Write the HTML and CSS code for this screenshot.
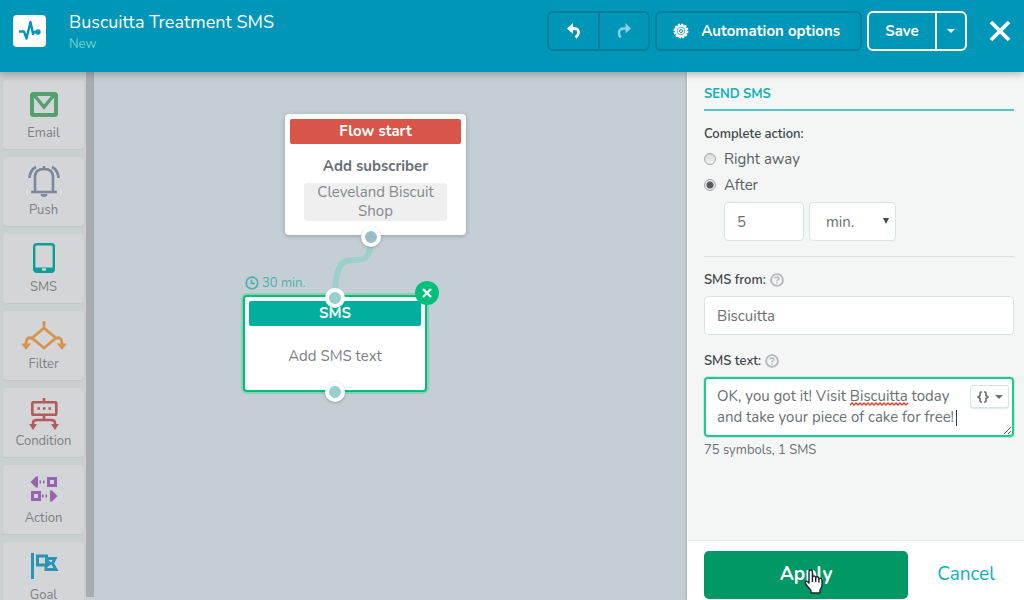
FILE: index.html
```html
<!DOCTYPE html>
<html lang="en">
<head>
<meta charset="utf-8">
<meta name="viewport" content="width=device-width, initial-scale=1">
<title>Buscuitta Treatment SMS</title>
<link rel="stylesheet" href="styles.css">
</head>
<body>
<header class="topbar">
  <div class="logo">
    <svg width="22" height="22" viewBox="0 0 22 22" fill="none" stroke="#0096b7" stroke-width="2.400" stroke-linejoin="round"><path d="M0 11.500H5L7.500 18.500L11.500 2L14 14L15 12H18"/><circle cx="19" cy="12" r="2.700" fill="#0096b7" stroke="none"/></svg>
  </div>
  <div class="heading">
    <h1>Buscuitta Treatment SMS</h1>
    <span class="status">New</span>
  </div>
  <div class="actions">
    <div class="group">
      <button class="tool" aria-label="Undo"><svg width="14" height="16" viewBox="0 0 14 16" fill="none" stroke="#fff" stroke-width="2.800"><path d="M3 5.500H7Q12 5.500 11.500 10Q11.300 12.500 8.500 14.500"/><path d="M6 0L0 5.500L6 11Z" fill="#fff" stroke="none"/></svg></button>
      <button class="tool faded" aria-label="Redo" disabled><svg width="14" height="16" viewBox="0 0 14 16" fill="none" stroke="#8dd1e1" stroke-width="2.400"><path d="M10 5.500H7Q2 5.500 2 10Q2 12.500 3.500 14.500"/><path d="M8.500 0L14 5.500L8.500 10.500Z" fill="#8dd1e1" stroke="none"/></svg></button>
    </div>
    <button class="options"><svg width="16" height="16" viewBox="0 0 16 16" fill="none"><circle cx="8" cy="8" r="6.300" fill="#fff"/><circle cx="8" cy="8" r="6.600" stroke="#fff" stroke-width="1.800" stroke-dasharray="2.200 1.250"/><circle cx="8" cy="8" r="3.800" stroke="#4db5cc"/><circle cx="8" cy="8" r="1.500" stroke="#0096b7"/></svg>Automation options</button>
    <div class="group save">
      <button class="save-main">Save</button>
      <button class="save-more" aria-label="More save options"><span class="caret"></span></button>
    </div>
    <button class="close" aria-label="Close"><svg width="22" height="22" viewBox="0 0 22 22" stroke="#fff" stroke-width="3.800"><path d="M2 2L20 20M20 2L2 20"/></svg></button>
  </div>
</header>
<div class="workspace">
  <nav class="palette" aria-label="Elements">
    <div class="tiles">
      <button class="tile"><svg width="28" height="32" viewBox="0 0 28 32" fill="none" stroke="#55a06c" stroke-width="4"><rect x="2" y="6" width="24" height="21" rx="1.500"/><path d="M4 7L14 19L24 7" stroke-width="3.400"/></svg>Email</button>
      <button class="tile"><svg width="32" height="32" viewBox="0 0 32 32" fill="none" stroke="#7b879c" stroke-width="2.600"><path d="M3 27H29M7 27V12Q7 4 16 4Q25 4 25 12V27M16 1V4"/><path d="M1.500 13Q2 5 8 2M30.500 13Q30 5 24 2"/><path d="M12.500 29H19.500Q19 32 16 32Q13 32 12.500 29Z" fill="#7b879c" stroke="none"/></svg>Push</button>
      <button class="tile"><svg width="24" height="32" viewBox="0 0 24 32" fill="none" stroke="#0a9f95" stroke-width="2.400"><rect x="2.200" y="2.200" width="19.600" height="27.600" rx="2.500"/><path d="M2 27.500H22" stroke-width="4"/><path d="M10 27.500H14" stroke="#d3d5d9"/></svg>SMS</button>
      <button class="tile"><svg width="46" height="32" viewBox="0 0 46 32" fill="none" stroke="#d8934a" stroke-width="2.800"><path d="M23 2V9L35 19L23 29L11 19L23 9M12 19H8Q5 19 5 26M34 19H38Q41 19 41 26"/><path d="M0 24.500H10L5 31ZM36 24.500H46L41 31Z" fill="#d8934a" stroke="none"/></svg>Filter</button>
      <button class="tile"><svg width="30" height="34" viewBox="0 0 30 34" fill="none" stroke="#b15b5b" stroke-width="2.600"><rect x="3.300" y="6.300" width="24" height="12.500" rx="1"/><path d="M15 2V6M15 19V24M4 30V27Q4 24 8 24H22Q26 24 26 27V30"/><path d="M8.500 12.500H11M14 12.500H16.500M19.500 12.500H22"/><path d="M0 28H8L4 34ZM22 28H30L26 34Z" fill="#b15b5b" stroke="none"/></svg>Condition</button>
      <button class="tile"><svg width="28" height="32" viewBox="0 -2 28 32" fill="none" stroke="#9465ac" stroke-width="3"><rect x="18.500" y="3.500" width="7" height="7"/><rect x="2.500" y="17.500" width="7" height="7"/><path d="M9.500 7H16M12 21H18.500" stroke-dasharray="1.500 2"/><path d="M0.500 7L6 1.500H8V12.500H6ZM27.500 21L22 15.500H20V26.500H22Z" fill="#9465ac" stroke="none"/></svg>Action</button>
      <button class="tile"><svg width="28" height="30" viewBox="0 0 28 30" fill="none" stroke="#2795b3" stroke-width="3"><path d="M2.500 3V29"/><rect x="7.500" y="6" width="9" height="9"/><path d="M16 8.500H25L22.500 13.500L26 19.500H16V16L20 13.500L17 11"/></svg>Goal</button>
    </div>
  </nav>
  <main class="canvas">
    <svg class="link" width="50" height="56" viewBox="0 0 50 56" fill="none" stroke="#9fcfcc" stroke-width="6"><path d="M43 0C43 18 36 20 28 20H24C12 20 7 30 7 56"/></svg>
    <section class="node start">
      <h2 class="node-title">Flow start</h2>
      <p class="node-lead">Add subscriber</p>
      <p class="node-tag">Cleveland Biscuit Shop</p>
      <span class="port port-start"></span>
    </section>
    <div class="delay"><svg width="14" height="14" viewBox="0 0 14 14" fill="none" stroke="#4fafac" stroke-width="1.700"><circle cx="7" cy="7" r="5.800"/><path d="M6.500 3.500V7.500H10"/></svg>30 min.</div>
    <section class="node sms">
      <h2 class="node-title">SMS</h2>
      <p class="node-text">Add SMS text</p>
      <span class="port port-in"></span>
      <span class="port port-out"></span>
      <button class="remove" aria-label="Remove"><svg width="10" height="10" viewBox="0 0 10 10" stroke="#fff" stroke-width="2.300"><path d="M1 1L9 9M9 1L1 9"/></svg></button>
    </section>
  </main>
  <aside class="panel">
    <form class="fields">
      <h2 class="panel-title">SEND SMS</h2>
      <fieldset>
        <legend>Complete action:</legend>
        <label class="choice"><input type="radio" name="when">Right away</label>
        <label class="choice"><input type="radio" name="when" checked>After</label>
        <div class="period">
          <input class="box amount" type="text" value="5" aria-label="Delay">
          <div class="unit"><select class="box" aria-label="Delay unit"><option>min.</option></select><span class="arrow"></span></div>
        </div>
      </fieldset>
      <div class="label-row"><label for="from">SMS from:</label><svg width="14" height="14" viewBox="0 0 14 14" fill="none" stroke="#b2babd" stroke-width="1.900"><circle cx="7" cy="7" r="5.900"/><path d="M5 5.600Q5 4 7 4Q9 4 9 5.500Q9 6.500 7 7.400V8.300M7 9.300V10.800" stroke-width="1.500"/></svg></div>
      <input class="box" id="from" type="text" value="Biscuitta">
      <div class="label-row second"><label for="text">SMS text:</label><svg width="14" height="14" viewBox="0 0 14 14" fill="none" stroke="#b2babd" stroke-width="1.900"><circle cx="7" cy="7" r="5.900"/><path d="M5 5.600Q5 4 7 4Q9 4 9 5.500Q9 6.500 7 7.400V8.300M7 9.300V10.800" stroke-width="1.500"/></svg></div>
      <div class="message">
        <textarea id="text" spellcheck="false">OK, you got it! Visit Biscuitta today
and take your piece of cake for free!</textarea>
        <svg class="squiggle" width="59" height="4" viewBox="0 0 59 4" fill="none" stroke="#f0382f" stroke-width="1.300"><path d="M0 3L2 1L4 3L6 1L8 3L10 1L12 3L14 1L16 3L18 1L20 3L22 1L24 3L26 1L28 3L30 1L32 3L34 1L36 3L38 1L40 3L42 1L44 3L46 1L48 3L50 1L52 3L54 1L56 3L58 1"/></svg>
        <span class="cursor"></span>
        <button type="button" class="insert" aria-label="Insert variable"><svg width="12" height="12" viewBox="0 0 12 12" fill="none" stroke="#687173" stroke-width="1.700"><path d="M5 1H4Q3 1 3 2.500V4.500L1 6L3 7.500V9.500Q3 11 4 11H5M7 1H8Q9 1 9 2.500V4.500L11 6L9 7.500V9.500Q9 11 8 11H7"/></svg><span class="caret"></span></button>
      </div>
      <p class="count">75 symbols, 1 SMS</p>
    </form>
    <footer class="panel-footer">
      <button class="apply">Apply</button>
      <a class="cancel" href="#">Cancel</a>
      <svg class="pointer" width="20" height="25" viewBox="0 0 20 25" fill="#fff" stroke="#20262b" stroke-width="1.400" stroke-linejoin="round"><path d="M5 14V3Q5 1 6.700 1Q8.400 1 8.400 3V9Q8.400 7 10 7Q11.600 7 11.700 9Q12 7.500 13.400 7.800Q14.800 8 14.900 10Q15.500 9 16.700 9.300Q18 9.600 18 11V16Q18 19 16 21V24H7V21.500L2 15.500Q0.500 13 2 12.300Q3.500 12 5 14Z"/><path d="M8.400 9V13M11.700 9V13M14.900 10V13.500"/></svg>
    </footer>
  </aside>
</div>
</body>
</html>
```
FILE: styles.css
```css
* { box-sizing: border-box; }
body {
  margin: 0;
  height: 100vh;
  display: flex;
  flex-direction: column;
  overflow: hidden;
  font-family: Nunito, Lato, sans-serif;
  font-size: 15px;
  color: #687073;
}
h1, h2, p { margin: 0; }
button, input, select, textarea { font: inherit; color: inherit; }
button { border: 0; padding: 0; background: none; cursor: pointer; }
svg { flex: none; }

.topbar {
  flex: none;
  display: flex;
  align-items: flex-start;
  height: 72px;
  padding: 11px 13px 0 13px;
  background: #0096b7;
  color: #fff;
  box-shadow: 0 1px 8px rgba(60, 60, 60, 0.45);
  z-index: 2;
}
.logo {
  display: flex;
  align-items: center;
  justify-content: center;
  width: 33px;
  height: 32px;
  margin: 4px 23px 0 0;
  border-radius: 4px;
  background: #fff;
}
.heading { flex: 1; }
h1 { font-size: 18px; line-height: 22px; font-weight: 400; }
.status { display: block; font-size: 13px; line-height: 22px; color: #6fd3c5; }
.actions { display: flex; align-items: center; gap: 5px; }
.group, .options {
  display: flex;
  align-items: center;
  height: 40px;
  border: 2px solid #007f9c;
  border-radius: 6px;
}
.tool { display: flex; align-items: center; justify-content: center; width: 49px; height: 36px; }
.faded { border-left: 2px solid #007f9c; width: 50px; }
.options { gap: 12px; padding: 0 20px 0 16px; font-weight: 700; }
.save { border-color: #fff; font-weight: 700; }
.save-main { width: 66px; height: 36px; }
.save-more { display: flex; align-items: center; justify-content: center; width: 30px; height: 36px; border-left: 2px solid #fff; }
.caret { border: 4px solid transparent; border-top-color: currentColor; border-bottom: 0; }
.close { display: flex; margin-left: 17px; }

.workspace { flex: 1; display: flex; min-height: 0; }
.palette {
  flex: none;
  width: 94px;
  overflow: hidden;
  background: linear-gradient(#a9acb1, #a9acb1) right top / 8px calc(100% - 3px) no-repeat, #cacfd2;
}
.tiles { display: flex; flex-direction: column; gap: 8px; width: 84px; padding: 8px 0 0 3px; }
.tile {
  flex: none;
  display: flex;
  flex-direction: column;
  align-items: center;
  justify-content: space-between;
  height: 69px;
  padding: 8px 0;
  border-radius: 4px;
  background: #d3d5d9;
  box-shadow: 0 1px 1px #c2c6ca;
  font-size: 13px;
  line-height: 16px;
  color: #7d8083;
}

.canvas { flex: 1; position: relative; overflow: hidden; background: #c3cfd4; }
.link { position: absolute; left: 234px; top: 168px; }
.node {
  position: absolute;
  padding: 5px;
  border-radius: 4px;
  background: #fff;
  text-align: center;
  box-shadow: 0 1px 4px rgba(70, 90, 100, 0.4);
}
.start { left: 191px; top: 42px; width: 181px; height: 121px; }
.node-title { border-radius: 2px; font-size: 15px; line-height: 25px; font-weight: 700; color: #fff; background: #d75649; }
.node-lead { margin-top: 12px; font-weight: 700; line-height: 20px; }
.node-tag { margin: 7px 14px 0; padding: 0 8px; border-radius: 3px; background: #efefef; line-height: 19px; color: #84898c; }
.sms {
  left: 149px;
  top: 223px;
  width: 184px;
  height: 97px;
  padding: 4px;
  border: 2px solid #00bd78;
  box-shadow: 0 0 0 2px #8fcdbb;
}
.sms .node-title { background: #00af9d; }
.node-text { margin-top: 20px; line-height: 20px; color: #7a8184; }
.port {
  position: absolute;
  width: 20px;
  height: 20px;
  border: 4px solid #fff;
  border-radius: 50%;
  background: #98cfc9;
  box-shadow: 0 1px 3px rgba(70, 90, 100, 0.4);
}
.port-start { left: 76px; bottom: -12px; background: #9abcc8; }
.port-in { left: 80px; top: -9px; box-shadow: none; }
.port-out { left: 80px; bottom: -12px; }
.remove {
  position: absolute;
  right: -14px;
  top: -16px;
  display: flex;
  align-items: center;
  justify-content: center;
  width: 24px;
  height: 24px;
  border-radius: 50%;
  background: #00bf7b;
}
.delay { position: absolute; left: 151px; top: 202px; display: flex; align-items: center; gap: 3px; font-size: 13px; line-height: 18px; color: #4fafac; }

.panel {
  flex: none;
  display: flex;
  flex-direction: column;
  width: 337px;
  border-left: 1px solid #fff;
  background: #f4f6f6;
  box-shadow: -1px 0 2px #a5afb5;
  z-index: 1;
}
.fields { flex: 1; padding: 11px 10px 0 16px; }
.panel-title { padding-bottom: 4px; border-bottom: 2px solid #4fc3c9; font-size: 13px; line-height: 22px; font-weight: 700; color: #12b0b5; }
fieldset { margin: 0; padding: 0 0 15px; border: 0; border-bottom: 1px solid #d0e4e2; }
legend { padding: 14px 0 3px; font-size: 13px; line-height: 18px; font-weight: 600; color: #3d4547; }
.choice { display: flex; align-items: center; gap: 8px; line-height: 26px; color: #565e60; }
input[type="radio"] {
  appearance: none;
  width: 12px;
  height: 12px;
  margin: 0;
  border: 1px solid #a4a9aa;
  border-radius: 50%;
  background: linear-gradient(#d7dbdb, #f0f1f1);
}
input[type="radio"]:checked { background: radial-gradient(#555b5d 0 3px, #e6e9e9 4px); }
.period { display: flex; gap: 5px; margin: 4px 0 0 20px; }
.box {
  display: block;
  width: 100%;
  height: 39px;
  padding: 0 12px;
  border: 1px solid #d4e5e4;
  border-radius: 4px;
  background: #fff;
  outline: 0;
}
.amount { width: 80px; }
.unit { position: relative; width: 87px; }
.unit .box { appearance: none; padding-left: 16px; }
.arrow { position: absolute; right: 7px; top: 16px; border: 3px solid transparent; border-top: 6px solid #40484a; border-bottom: 0; pointer-events: none; }
.label-row { display: flex; align-items: center; gap: 4px; margin: 14px 0 7px; font-size: 13px; line-height: 18px; font-weight: 600; color: #3d4547; }
.second { margin-top: 17px; }
.message { position: relative; }
textarea {
  display: block;
  width: 100%;
  height: 60px;
  padding: 7px 11px;
  border: 2px solid #22c98e;
  border-radius: 4px;
  background: #fff;
  box-shadow: 0 0 0 1px #c4eedd;
  line-height: 21px;
  outline: 0;
  overflow: hidden;
  resize: vertical;
}
.squiggle { position: absolute; left: 146px; top: 25px; }
.cursor { position: absolute; left: 252px; top: 33px; width: 1px; height: 16px; background: #30383a; }
.insert {
  position: absolute;
  right: 5px;
  top: 8px;
  display: flex;
  align-items: center;
  justify-content: center;
  gap: 6px;
  width: 39px;
  height: 23px;
  border: 1px solid #d4e5e4;
  border-radius: 3px;
  background: #fff;
  box-shadow: 0 1px 1px #dfe9e8;
}
.count { margin-top: 4px; font-size: 13px; line-height: 18px; }
.panel-footer {
  position: relative;
  flex: none;
  display: flex;
  align-items: center;
  height: 60px;
  padding: 8px 0 0 16px;
  border-top: 1px solid #e7eaea;
  background: #fff;
}
.apply { width: 204px; height: 48px; padding-bottom: 2px; border-radius: 5px; background: #009966; color: #fff; font-size: 19px; font-weight: 700; }
.cancel { flex: 1; padding-bottom: 2px; text-align: center; font-size: 19px; color: #12b0b5; text-decoration: none; }
.pointer { position: absolute; left: 116px; top: 28px; pointer-events: none; }
```
